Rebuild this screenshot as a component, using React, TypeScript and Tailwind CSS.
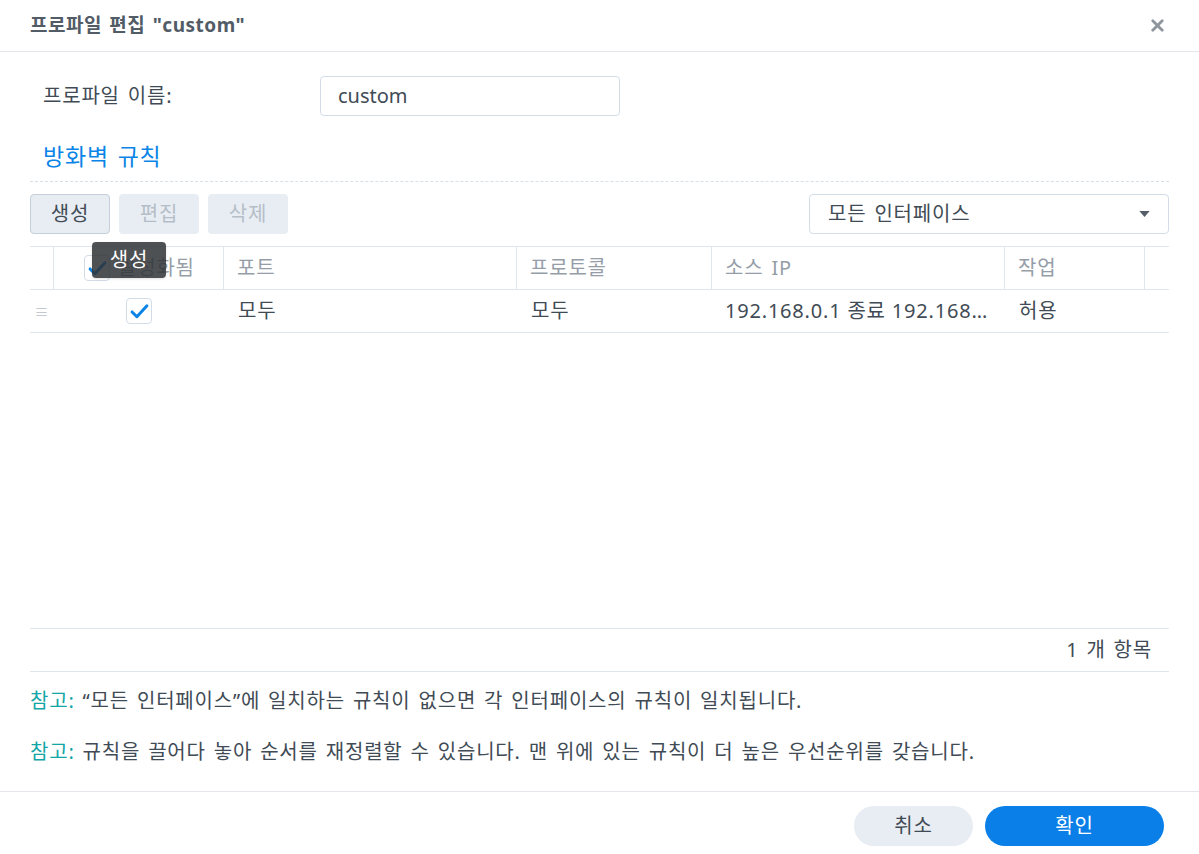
import { X } from "lucide-react";

const font = { fontFamily: '"Noto Sans", "Noto Sans CJK KR", sans-serif' };

function Check() {
  return (
    <svg viewBox="0 0 24 24" className="h-[21px] w-[21px]" fill="none">
      <path d="M3.5 12.5l5.5 5.5L20.5 5.5" stroke="#0a84e6" strokeWidth="3.4" strokeLinecap="round" strokeLinejoin="round" />
    </svg>
  );
}

export default function App() {
  return (
    <div
      className="h-[854px] w-[1199px] bg-white text-[#414b55] flex flex-col tracking-[0.8px] [word-spacing:2px]"
      style={font}
    >
      {/* header */}
      <div className="h-[52px] shrink-0 border-b border-[#e3e6ea] flex items-center justify-between pl-[30px] pr-[32px]">
        <h1 className="text-[19px] font-bold text-[#525c67] leading-none tracking-[0.5px]">프로파일 편집 "custom"</h1>
        <X className="h-[19px] w-[19px] text-[#8e959d]" strokeWidth={3.5} />
      </div>

      <div className="flex-1 flex flex-col px-[30px]">
        {/* name */}
        <div className="flex items-center mt-[24px] h-[40px]">
          <div className="w-[290px] pl-[13px] text-[20px]">프로파일 이름:</div>
          <div className="w-[300px] h-[40px] rounded-[4px] border border-[#d3dde8] flex items-center px-[17px] text-[20px] tracking-normal">custom</div>
        </div>

        {/* section */}
        <div className="mt-[23px] pl-[13px] pb-[8px] text-[23px] text-[#0a84e6] border-b border-dashed border-[#d6e0ea] leading-[34px]">방화벽 규칙</div>

        {/* toolbar */}
        <div className="mt-[12px] flex items-center justify-between">
          <div className="flex gap-[9px]">
            <button className="w-[80px] h-[40px] rounded-[4px] bg-[#e8edf3] border border-[#c5ced9] text-[20px] text-[#414b55]">생성</button>
            <button className="w-[80px] h-[40px] rounded-[4px] bg-[#e8edf3] text-[20px] text-[#b5bec8]">편집</button>
            <button className="w-[80px] h-[40px] rounded-[4px] bg-[#e8edf3] text-[20px] text-[#b5bec8]">삭제</button>
          </div>
          <div className="w-[360px] h-[40px] rounded-[4px] border border-[#d3dde8] flex items-center justify-between pl-[18px] pr-[18px] text-[20px]">
            <span>모든 인터페이스</span>
            <svg viewBox="0 0 12 7" className="w-[11px] h-[6px]"><path d="M0 0h12L6 7z" fill="#555e68" /></svg>
          </div>
        </div>

        {/* table */}
        <div className="mt-[12px] relative">
          <div className="flex h-[44px] border-t border-b border-[#e0e6ed] text-[20px] text-[#959ea8] items-stretch">
            <div className="w-[24px] border-r border-[#e0e6ed]" />
            <div className="w-[170px] border-r border-[#e0e6ed] flex items-center pl-[30px] gap-[8px]">
              <div className="w-[26px] h-[26px] rounded-[4px] border border-[#d3dde8] flex items-center justify-center"><Check /></div>
              <span>활성화됨</span>
            </div>
            <div className="w-[293px] border-r border-[#e0e6ed] flex items-center pl-[13px]">포트</div>
            <div className="w-[195px] border-r border-[#e0e6ed] flex items-center pl-[13px]">프로토콜</div>
            <div className="w-[293px] border-r border-[#e0e6ed] flex items-center pl-[13px]">소스 IP</div>
            <div className="w-[140px] border-r border-[#e0e6ed] flex items-center pl-[13px]">작업</div>
            <div className="flex-1" />
          </div>
          <div className="flex h-[43px] border-b border-[#e0e6ed] text-[20px] items-center">
            <div className="w-[24px] flex justify-center text-[#c2c9d1] text-[14px]">≡</div>
            <div className="w-[170px] flex justify-center">
              <div className="w-[26px] h-[26px] rounded-[4px] border border-[#d3dde8] flex items-center justify-center"><Check /></div>
            </div>
            <div className="w-[293px] pl-[14px]">모두</div>
            <div className="w-[195px] pl-[14px]">모두</div>
            <div className="w-[293px] pl-[13px] truncate pr-[14px] [word-spacing:0px]">192.168.0.1 종료 192.168.0.255</div>
            <div className="w-[140px] pl-[14px]">허용</div>
          </div>
          {/* tooltip */}
          <div className="absolute left-[62px] top-[-4px] h-[36px] w-[74px] rounded-[4px] bg-[#2f3236]/85 text-white text-[20px] flex items-center justify-center shadow">생성</div>
        </div>

        <div className="flex-1" />

        {/* count */}
        <div className="h-[44px] border-t border-b border-[#e0e6ed] flex items-center justify-end pr-[17px] text-[20px]">1 개 항목</div>

        <div className="mt-[15px] text-[20px] leading-[28px]"><span className="text-[#13a6a6]">참고:</span> “모든 인터페이스”에 일치하는 규칙이 없으면 각 인터페이스의 규칙이 일치됩니다.</div>
        <div className="mt-[23px] mb-[25px] text-[20px] leading-[28px]"><span className="text-[#13a6a6]">참고:</span> 규칙을 끌어다 놓아 순서를 재정렬할 수 있습니다. 맨 위에 있는 규칙이 더 높은 우선순위를 갖습니다.</div>
      </div>

      {/* footer */}
      <div className="h-[63px] shrink-0 border-t border-[#e3e6ea] flex items-start justify-end gap-[12px] pr-[35px] pt-[14px]">
        <button className="w-[119px] h-[40px] rounded-full bg-[#e8edf3] text-[20px] text-[#414b55]">취소</button>
        <button className="w-[179px] h-[40px] rounded-full bg-[#0a7fe8] text-[20px] text-white">확인</button>
      </div>
    </div>
  );
}
